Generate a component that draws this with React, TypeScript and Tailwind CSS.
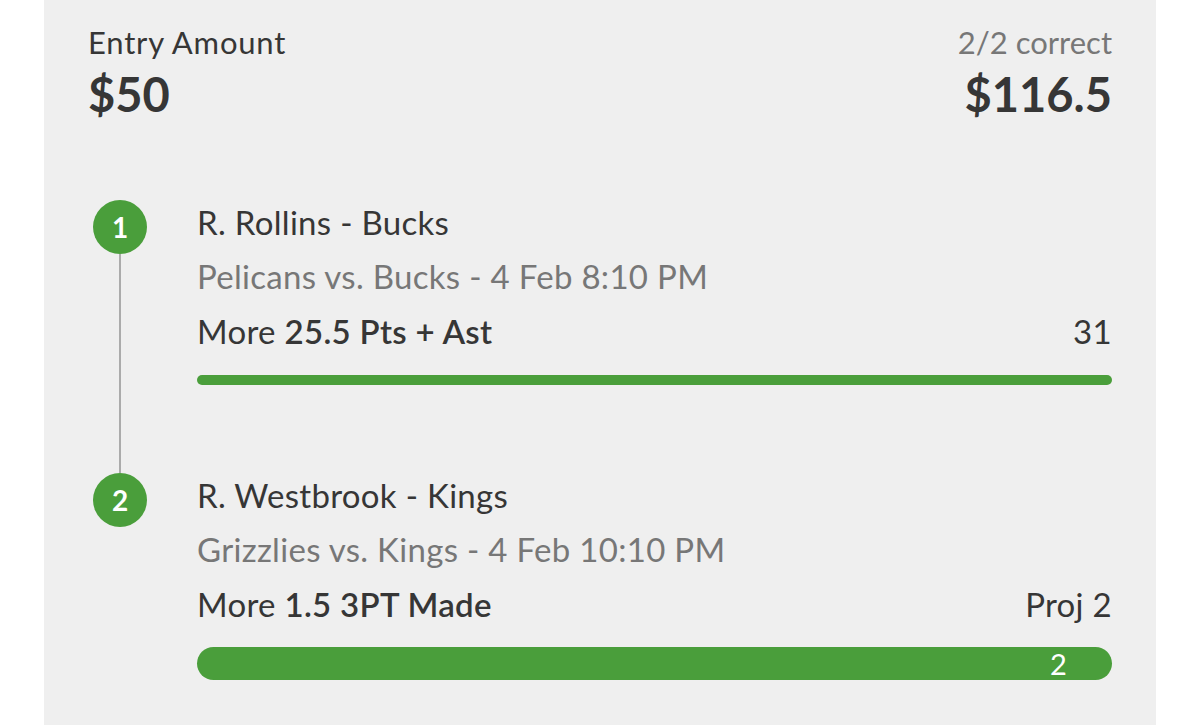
import React from "react";

type Pick = {
  num: number;
  player: string;
  game: string;
  line: string;
  result: string;
  bar: "thin" | "thick";
  last?: boolean;
};

const picks: Pick[] = [
  {
    num: 1,
    player: "R. Rollins - Bucks",
    game: "Pelicans vs. Bucks - 4 Feb 8:10 PM",
    line: "25.5 Pts + Ast",
    result: "31",
    bar: "thin",
  },
  {
    num: 2,
    player: "R. Westbrook - Kings",
    game: "Grizzlies vs. Kings - 4 Feb 10:10 PM",
    line: "1.5 3PT Made",
    result: "Proj 2",
    bar: "thick",
    last: true,
  },
];

function PickRow({ pick }: { pick: Pick }) {
  return (
    <div className={`flex ${pick.last ? "" : "h-[273px]"}`}>
      <div className="ml-[5px] flex w-[54px] flex-col items-center">
        <div className="flex h-[54px] w-[54px] shrink-0 items-center justify-center rounded-full bg-[#4a9e3b] text-[28px] font-bold leading-none text-white">
          {pick.num}
        </div>
        {!pick.last && <div className="w-[2px] flex-1 bg-[#ababab]" />}
      </div>

      <div className="ml-[50px] flex-1 tracking-[0.3px]">
        <div className="text-[33px] leading-[44px] text-[#363636]">{pick.player}</div>
        <div className="mt-[10px] text-[33px] leading-[44px] text-[#777]">{pick.game}</div>
        <div className="mt-[11px] flex items-center justify-between text-[33px] leading-[44px] text-[#363636]">
          <div>
            More <span className="font-semibold">{pick.line}</span>
          </div>
          <div>{pick.result}</div>
        </div>
        {pick.bar === "thin" ? (
          <div className="mt-[22px] h-[10px] w-full rounded-full bg-[#4a9e3b]" />
        ) : (
          <div className="mt-[21px] flex h-[33px] w-full items-center justify-end rounded-full bg-[#4a9e3b] pr-[45px] text-[29px] leading-none text-white">
            2
          </div>
        )}
      </div>
    </div>
  );
}

export default function App() {
  return (
    <div className="h-[725px] w-[1200px] overflow-hidden bg-white font-['Lato','Open_Sans',sans-serif]">
      <div className="ml-[44px] h-full w-[1112px] bg-[#efefef] px-[44px] pt-[22px]">
        <div className="flex items-start justify-between">
          <div>
            <div className="text-[31px] leading-[40px] tracking-[0.8px] text-[#363636]">Entry Amount</div>
            <div className="mt-[4px] text-[47px] font-bold leading-[56px] text-[#363636]">$50</div>
          </div>
          <div className="text-right">
            <div className="text-[31px] leading-[40px] text-[#777]">2/2 correct</div>
            <div className="mt-[4px] text-[47px] font-bold leading-[56px] text-[#363636]">$116.5</div>
          </div>
        </div>

        <div className="mt-[78px]">
          {picks.map((p) => (
            <PickRow key={p.num} pick={p} />
          ))}
        </div>
      </div>
    </div>
  );
}
